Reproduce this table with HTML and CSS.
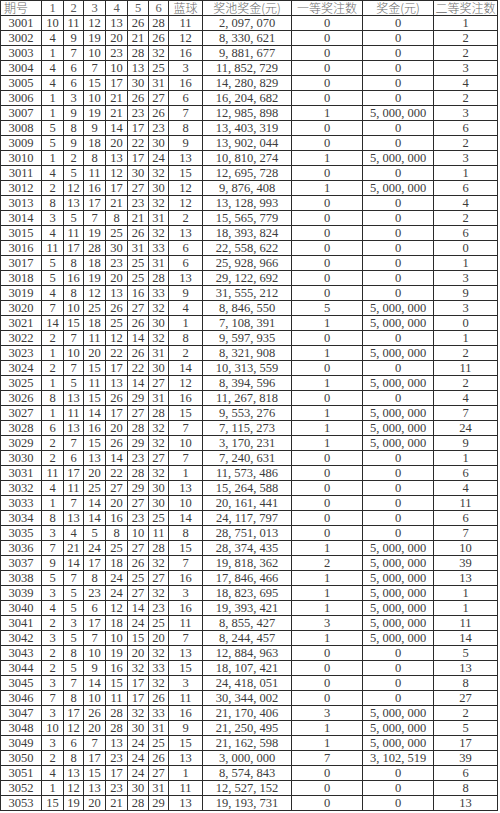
FILE: index.html
```html
<!DOCTYPE html>
<html lang="zh">
<head>
<meta charset="utf-8">
<title>双色球开奖数据</title>
<link rel="stylesheet" href="styles.css">
</head>
<body>
<table class="draws">
<colgroup>
<col class="c-no"><col class="c-b1"><col class="c-b2"><col class="c-b3"><col class="c-b4"><col class="c-b5"><col class="c-b6"><col class="c-blue"><col class="c-pool"><col class="c-n1"><col class="c-prize"><col class="c-n2">
</colgroup>
<thead>
<tr class="head"><th class="cjk left">期号</th><th>1</th><th>2</th><th>3</th><th>4</th><th>5</th><th>6</th><th class="cjk">蓝球</th><th class="cjk">奖池奖金(元)</th><th class="cjk">一等奖注数</th><th class="cjk">奖金(元)</th><th class="cjk">二等奖注数</th></tr>
</thead>
<tbody>
<tr><td>3001</td><td>10</td><td>11</td><td>12</td><td>13</td><td>26</td><td>28</td><td>11</td><td>2, 097, 070</td><td>0</td><td>0</td><td>1</td></tr>
<tr><td>3002</td><td>4</td><td>9</td><td>19</td><td>20</td><td>21</td><td>26</td><td>12</td><td>8, 330, 621</td><td>0</td><td>0</td><td>2</td></tr>
<tr><td>3003</td><td>1</td><td>7</td><td>10</td><td>23</td><td>28</td><td>32</td><td>16</td><td>9, 881, 677</td><td>0</td><td>0</td><td>2</td></tr>
<tr><td>3004</td><td>4</td><td>6</td><td>7</td><td>10</td><td>13</td><td>25</td><td>3</td><td>11, 852, 729</td><td>0</td><td>0</td><td>3</td></tr>
<tr><td>3005</td><td>4</td><td>6</td><td>15</td><td>17</td><td>30</td><td>31</td><td>16</td><td>14, 280, 829</td><td>0</td><td>0</td><td>4</td></tr>
<tr><td>3006</td><td>1</td><td>3</td><td>10</td><td>21</td><td>26</td><td>27</td><td>6</td><td>16, 204, 682</td><td>0</td><td>0</td><td>2</td></tr>
<tr><td>3007</td><td>1</td><td>9</td><td>19</td><td>21</td><td>23</td><td>26</td><td>7</td><td>12, 985, 898</td><td>1</td><td>5, 000, 000</td><td>3</td></tr>
<tr><td>3008</td><td>5</td><td>8</td><td>9</td><td>14</td><td>17</td><td>23</td><td>8</td><td>13, 403, 319</td><td>0</td><td>0</td><td>6</td></tr>
<tr><td>3009</td><td>5</td><td>9</td><td>18</td><td>20</td><td>22</td><td>30</td><td>9</td><td>13, 902, 044</td><td>0</td><td>0</td><td>2</td></tr>
<tr><td>3010</td><td>1</td><td>2</td><td>8</td><td>13</td><td>17</td><td>24</td><td>13</td><td>10, 810, 274</td><td>1</td><td>5, 000, 000</td><td>3</td></tr>
<tr><td>3011</td><td>4</td><td>5</td><td>11</td><td>12</td><td>30</td><td>32</td><td>15</td><td>12, 695, 728</td><td>0</td><td>0</td><td>1</td></tr>
<tr><td>3012</td><td>2</td><td>12</td><td>16</td><td>17</td><td>27</td><td>30</td><td>12</td><td>9, 876, 408</td><td>1</td><td>5, 000, 000</td><td>6</td></tr>
<tr><td>3013</td><td>8</td><td>13</td><td>17</td><td>21</td><td>23</td><td>32</td><td>12</td><td>13, 128, 993</td><td>0</td><td>0</td><td>4</td></tr>
<tr><td>3014</td><td>3</td><td>5</td><td>7</td><td>8</td><td>21</td><td>31</td><td>2</td><td>15, 565, 779</td><td>0</td><td>0</td><td>2</td></tr>
<tr><td>3015</td><td>4</td><td>11</td><td>19</td><td>25</td><td>26</td><td>32</td><td>13</td><td>18, 393, 824</td><td>0</td><td>0</td><td>6</td></tr>
<tr><td>3016</td><td>11</td><td>17</td><td>28</td><td>30</td><td>31</td><td>33</td><td>6</td><td>22, 558, 622</td><td>0</td><td>0</td><td>0</td></tr>
<tr><td>3017</td><td>5</td><td>8</td><td>18</td><td>23</td><td>25</td><td>31</td><td>6</td><td>25, 928, 966</td><td>0</td><td>0</td><td>1</td></tr>
<tr><td>3018</td><td>5</td><td>16</td><td>19</td><td>20</td><td>25</td><td>28</td><td>13</td><td>29, 122, 692</td><td>0</td><td>0</td><td>3</td></tr>
<tr><td>3019</td><td>4</td><td>8</td><td>12</td><td>13</td><td>16</td><td>33</td><td>9</td><td>31, 555, 212</td><td>0</td><td>0</td><td>9</td></tr>
<tr><td>3020</td><td>7</td><td>10</td><td>25</td><td>26</td><td>27</td><td>32</td><td>4</td><td>8, 846, 550</td><td>5</td><td>5, 000, 000</td><td>3</td></tr>
<tr><td>3021</td><td>14</td><td>15</td><td>18</td><td>25</td><td>26</td><td>30</td><td>1</td><td>7, 108, 391</td><td>1</td><td>5, 000, 000</td><td>0</td></tr>
<tr><td>3022</td><td>2</td><td>7</td><td>11</td><td>12</td><td>14</td><td>32</td><td>8</td><td>9, 597, 935</td><td>0</td><td>0</td><td>1</td></tr>
<tr><td>3023</td><td>1</td><td>10</td><td>20</td><td>22</td><td>26</td><td>31</td><td>2</td><td>8, 321, 908</td><td>1</td><td>5, 000, 000</td><td>2</td></tr>
<tr><td>3024</td><td>2</td><td>7</td><td>15</td><td>17</td><td>22</td><td>30</td><td>14</td><td>10, 313, 559</td><td>0</td><td>0</td><td>11</td></tr>
<tr><td>3025</td><td>1</td><td>5</td><td>11</td><td>13</td><td>14</td><td>27</td><td>12</td><td>8, 394, 596</td><td>1</td><td>5, 000, 000</td><td>2</td></tr>
<tr><td>3026</td><td>8</td><td>13</td><td>15</td><td>26</td><td>29</td><td>31</td><td>16</td><td>11, 267, 818</td><td>0</td><td>0</td><td>4</td></tr>
<tr><td>3027</td><td>1</td><td>11</td><td>14</td><td>17</td><td>27</td><td>28</td><td>15</td><td>9, 553, 276</td><td>1</td><td>5, 000, 000</td><td>7</td></tr>
<tr><td>3028</td><td>6</td><td>13</td><td>16</td><td>20</td><td>28</td><td>32</td><td>7</td><td>7, 115, 273</td><td>1</td><td>5, 000, 000</td><td>24</td></tr>
<tr><td>3029</td><td>2</td><td>7</td><td>15</td><td>26</td><td>29</td><td>32</td><td>10</td><td>3, 170, 231</td><td>1</td><td>5, 000, 000</td><td>9</td></tr>
<tr><td>3030</td><td>2</td><td>6</td><td>13</td><td>14</td><td>23</td><td>27</td><td>7</td><td>7, 240, 631</td><td>0</td><td>0</td><td>1</td></tr>
<tr><td>3031</td><td>11</td><td>17</td><td>20</td><td>22</td><td>28</td><td>32</td><td>1</td><td>11, 573, 486</td><td>0</td><td>0</td><td>6</td></tr>
<tr><td>3032</td><td>4</td><td>11</td><td>25</td><td>27</td><td>29</td><td>30</td><td>13</td><td>15, 264, 588</td><td>0</td><td>0</td><td>4</td></tr>
<tr><td>3033</td><td>1</td><td>7</td><td>14</td><td>20</td><td>27</td><td>30</td><td>10</td><td>20, 161, 441</td><td>0</td><td>0</td><td>11</td></tr>
<tr><td>3034</td><td>8</td><td>13</td><td>14</td><td>16</td><td>23</td><td>25</td><td>14</td><td>24, 117, 797</td><td>0</td><td>0</td><td>6</td></tr>
<tr><td>3035</td><td>3</td><td>4</td><td>5</td><td>8</td><td>10</td><td>11</td><td>8</td><td>28, 751, 013</td><td>0</td><td>0</td><td>7</td></tr>
<tr><td>3036</td><td>7</td><td>21</td><td>24</td><td>25</td><td>27</td><td>28</td><td>15</td><td>28, 374, 435</td><td>1</td><td>5, 000, 000</td><td>10</td></tr>
<tr><td>3037</td><td>9</td><td>14</td><td>17</td><td>18</td><td>26</td><td>32</td><td>7</td><td>19, 818, 362</td><td>2</td><td>5, 000, 000</td><td>39</td></tr>
<tr><td>3038</td><td>5</td><td>7</td><td>8</td><td>24</td><td>25</td><td>27</td><td>16</td><td>17, 846, 466</td><td>1</td><td>5, 000, 000</td><td>13</td></tr>
<tr><td>3039</td><td>3</td><td>5</td><td>23</td><td>24</td><td>27</td><td>32</td><td>3</td><td>18, 823, 695</td><td>1</td><td>5, 000, 000</td><td>1</td></tr>
<tr><td>3040</td><td>4</td><td>5</td><td>6</td><td>12</td><td>14</td><td>23</td><td>16</td><td>19, 393, 421</td><td>1</td><td>5, 000, 000</td><td>1</td></tr>
<tr><td>3041</td><td>2</td><td>3</td><td>17</td><td>18</td><td>24</td><td>25</td><td>11</td><td>8, 855, 427</td><td>3</td><td>5, 000, 000</td><td>11</td></tr>
<tr><td>3042</td><td>3</td><td>5</td><td>7</td><td>10</td><td>15</td><td>20</td><td>7</td><td>8, 244, 457</td><td>1</td><td>5, 000, 000</td><td>14</td></tr>
<tr><td>3043</td><td>2</td><td>8</td><td>10</td><td>19</td><td>20</td><td>32</td><td>13</td><td>12, 884, 963</td><td>0</td><td>0</td><td>5</td></tr>
<tr><td>3044</td><td>2</td><td>5</td><td>9</td><td>16</td><td>32</td><td>33</td><td>15</td><td>18, 107, 421</td><td>0</td><td>0</td><td>13</td></tr>
<tr><td>3045</td><td>3</td><td>7</td><td>14</td><td>15</td><td>17</td><td>32</td><td>3</td><td>24, 418, 051</td><td>0</td><td>0</td><td>8</td></tr>
<tr><td>3046</td><td>7</td><td>8</td><td>10</td><td>11</td><td>17</td><td>26</td><td>11</td><td>30, 344, 002</td><td>0</td><td>0</td><td>27</td></tr>
<tr><td>3047</td><td>3</td><td>17</td><td>26</td><td>28</td><td>32</td><td>33</td><td>16</td><td>21, 170, 406</td><td>3</td><td>5, 000, 000</td><td>2</td></tr>
<tr><td>3048</td><td>10</td><td>12</td><td>20</td><td>28</td><td>30</td><td>31</td><td>9</td><td>21, 250, 495</td><td>1</td><td>5, 000, 000</td><td>5</td></tr>
<tr><td>3049</td><td>3</td><td>6</td><td>7</td><td>13</td><td>24</td><td>25</td><td>15</td><td>21, 162, 598</td><td>1</td><td>5, 000, 000</td><td>17</td></tr>
<tr><td>3050</td><td>2</td><td>8</td><td>17</td><td>23</td><td>24</td><td>26</td><td>13</td><td>3, 000, 000</td><td>7</td><td>3, 102, 519</td><td>39</td></tr>
<tr><td>3051</td><td>4</td><td>13</td><td>15</td><td>17</td><td>24</td><td>27</td><td>1</td><td>8, 574, 843</td><td>0</td><td>0</td><td>6</td></tr>
<tr><td>3052</td><td>1</td><td>12</td><td>13</td><td>23</td><td>30</td><td>31</td><td>11</td><td>12, 527, 152</td><td>0</td><td>0</td><td>8</td></tr>
<tr><td>3053</td><td>15</td><td>19</td><td>20</td><td>21</td><td>28</td><td>29</td><td>13</td><td>19, 193, 731</td><td>0</td><td>0</td><td>13</td></tr>
</tbody>
</table>
</body>
</html>
```
FILE: styles.css
```css
html, body {
  margin: 0;
  padding: 0;
  background: #ffffff;
}

.draws {
  border-collapse: separate;
  border-spacing: 0;
  table-layout: fixed;
  width: 498px;
  border-top: 1px solid #2b2b2b;
  border-left: 1px solid #2b2b2b;
  font-family: "Liberation Serif", "Noto Sans CJK SC", serif;
  font-size: 12.5px;
  color: #3c3c3c;
}

.c-no { width: 41px; }
.c-b1 { width: 22px; }
.c-b2 { width: 20px; }
.c-b3 { width: 22px; }
.c-b4 { width: 22px; }
.c-b5 { width: 21px; }
.c-b6 { width: 20px; }
.c-blue { width: 34px; }
.c-pool { width: 89px; }
.c-n1 { width: 71px; }
.c-prize { width: 71px; }
.c-n2 { width: 64px; }

.draws th,
.draws td {
  box-sizing: border-box;
  height: 15px;
  padding: 0;
  border-right: 1px solid #2b2b2b;
  border-bottom: 1px solid #2b2b2b;
  text-align: center;
  vertical-align: middle;
  line-height: 14px;
  font-weight: normal;
  white-space: nowrap;
}

.draws th {
  color: #5a5a5a;
}

.draws th.cjk {
  font-family: "Noto Sans CJK SC", sans-serif;
  font-size: 12px;
  line-height: 14px;
  font-weight: 300;
  color: #6a6a6a;
}

.draws th.left {
  text-align: left;
  padding-left: 3px;
}
```
